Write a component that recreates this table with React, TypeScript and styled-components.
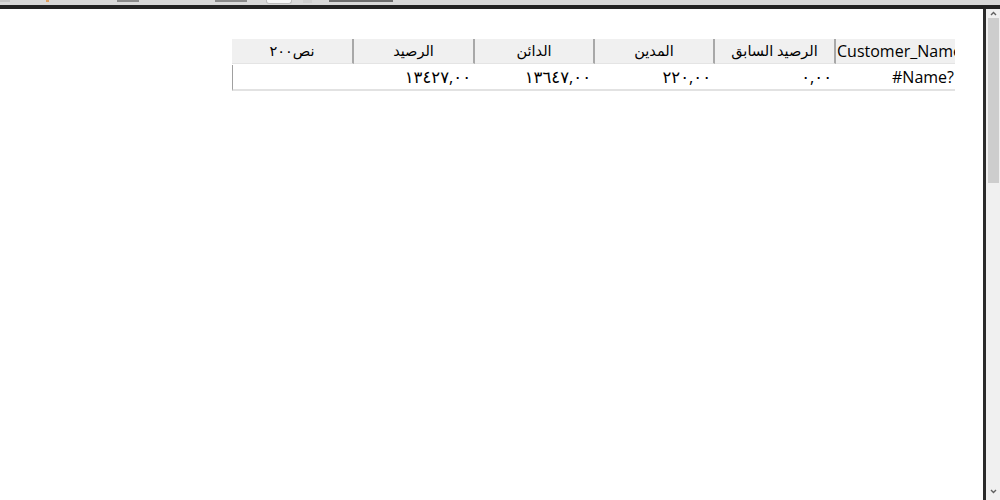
import React from 'react'
import styled, { createGlobalStyle } from 'styled-components'

const GlobalStyle = createGlobalStyle`
  html, body {
    margin: 0;
    padding: 0;
    background: #fff;
  }
  body {
    font-family: "Open Sans", "DejaVu Sans", sans-serif;
  }
`

const Frame = styled.div`
  width: 1000px;
  height: 500px;
  display: flex;
  flex-direction: column;
  overflow: hidden;
`

const TopStrip = styled.div`
  height: 5px;
  background: #d9d9d9;
  display: flex;
  align-items: flex-start;
`

const Mark = styled.div<{ $w: number; $ml: number; $c: string; $h?: number; $r?: boolean }>`
  width: ${p => p.$w}px;
  height: ${p => p.$h ?? 2}px;
  margin-left: ${p => p.$ml}px;
  background: ${p => p.$c};
  border-radius: ${p => (p.$r ? '0 0 3px 3px' : '0')};
  border: ${p => (p.$r ? '1px solid #bdbdbd' : 'none')};
  border-top: none;
`

const DarkLine = styled.div`
  height: 4px;
  background: #232323;
`

const Body = styled.div`
  flex: 1;
  display: flex;
  min-height: 0;
`

const Content = styled.div`
  flex: 1;
  padding: 29.5px 0 0 232px;
`

const Edge = styled.div`
  width: 3px;
  background: #2b2b2b;
`

const Scrollbar = styled.div`
  width: 14px;
  background: #f0f0f0;
  display: flex;
  flex-direction: column;
  align-items: center;
`

const Arrow = styled.div`
  height: 9px;
  display: flex;
  align-items: center;
  justify-content: center;
`

const Thumb = styled.div`
  width: 11px;
  height: 165px;
  background: #cdcdcd;
  margin-left: 1px;
`

const Spacer = styled.div`
  flex: 1;
`

const Grid = styled.div`
  width: 723px;
  overflow: hidden;
  display: grid;
  grid-template-columns: 122px 121px 120px 120px 121px 121px;
  font-size: 14.5px;
  color: #000;
`

const HeadCell = styled.div<{ $last?: boolean }>`
  box-sizing: border-box;
  height: 25px;
  background: #f0f0f0;
  border-right: ${p => (p.$last ? 'none' : '2px solid #a8a8a8')};
  border-bottom: 1px solid #e4e4e4;
  display: flex;
  align-items: center;
  justify-content: ${p => (p.$last ? 'flex-start' : 'center')};
  padding-left: ${p => (p.$last ? '1px' : '0')};
  font-size: ${p => (p.$last ? '16px' : '14.5px')};
  white-space: nowrap;
  overflow: hidden;
  direction: ${p => (p.$last ? 'ltr' : 'rtl')};
`

const DataCell = styled.div<{ $first?: boolean; $latin?: boolean }>`
  box-sizing: border-box;
  height: 26px;
  margin-top: 1px;
  border-left: ${p => (p.$first ? '1px solid #a0a0a0' : 'none')};
  border-bottom: 2px solid #e2e2e2;
  display: flex;
  align-items: center;
  justify-content: flex-end;
  padding-right: ${p => (p.$latin ? '3px' : '4px')};
  font-size: ${p => (p.$latin ? '16px' : '16.5px')};
  letter-spacing: ${p => (p.$latin ? '0' : '0.6px')};
  white-space: nowrap;
  direction: ltr;
`

const headers = ['نص٢٠٠', 'الرصيد', 'الدائن', 'المدين', 'الرصيد السابق', 'Customer_Name']
const values = ['', '١٣٤٢٧,٠٠', '١٣٦٤٧,٠٠', '٢٢٠,٠٠', '٠,٠٠', '#Name?']

function ChevronUp() {
  return (
    <svg width="7" height="5" viewBox="0 0 7 5">
      <path d="M1 4 L3.5 1.5 L6 4" fill="none" stroke="#606060" strokeWidth="1.4" />
    </svg>
  )
}

function ChevronDown() {
  return (
    <svg width="7" height="5" viewBox="0 0 7 5">
      <path d="M1 1 L3.5 3.5 L6 1" fill="none" stroke="#606060" strokeWidth="1.4" />
    </svg>
  )
}

export default function App() {
  return (
    <Frame>
      <GlobalStyle />
      <TopStrip>
        <Mark $w={10} $ml={0} $c="#c4c4c4" />
        <Mark $w={3} $ml={36} $c="#e0a060" />
        <Mark $w={22} $ml={68} $c="#8a8a8a" />
        <Mark $w={32} $ml={76} $c="#8a8a8a" />
        <Mark $w={24} $ml={19} $c="#f7f7f7" $h={3} $r />
        <Mark $w={9} $ml={11} $c="#cfcfcf" $h={3} />
        <Mark $w={64} $ml={17} $c="#6e6e6e" />
      </TopStrip>
      <DarkLine />
      <Body>
        <Content>
          <Grid>
            {headers.map((h, i) => (
              <HeadCell key={h} $last={i === headers.length - 1}>
                {h}
              </HeadCell>
            ))}
            {values.map((v, i) => (
              <DataCell key={i} $first={i === 0} $latin={i === values.length - 1}>
                {v}
              </DataCell>
            ))}
          </Grid>
        </Content>
        <Edge />
        <Scrollbar>
          <Arrow>
            <ChevronUp />
          </Arrow>
          <Thumb />
          <Spacer />
          <Arrow style={{ marginBottom: 4 }}>
            <ChevronDown />
          </Arrow>
        </Scrollbar>
      </Body>
    </Frame>
  )
}
